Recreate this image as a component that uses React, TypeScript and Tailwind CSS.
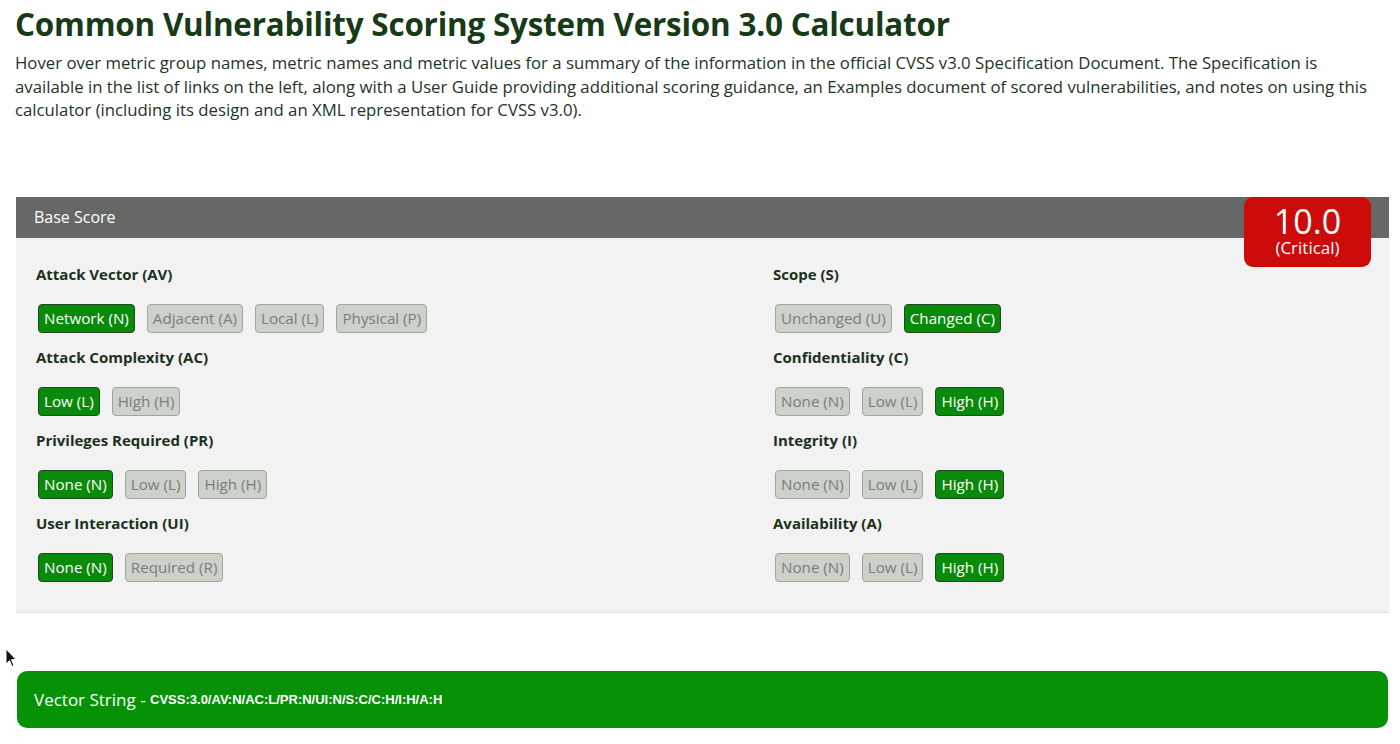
const groupsLeft = [
  { name: 'Attack Vector (AV)', options: ['Network (N)', 'Adjacent (A)', 'Local (L)', 'Physical (P)'], selected: 0 },
  { name: 'Attack Complexity (AC)', options: ['Low (L)', 'High (H)'], selected: 0 },
  { name: 'Privileges Required (PR)', options: ['None (N)', 'Low (L)', 'High (H)'], selected: 0 },
  { name: 'User Interaction (UI)', options: ['None (N)', 'Required (R)'], selected: 0 },
];

const groupsRight = [
  { name: 'Scope (S)', options: ['Unchanged (U)', 'Changed (C)'], selected: 1 },
  { name: 'Confidentiality (C)', options: ['None (N)', 'Low (L)', 'High (H)'], selected: 2 },
  { name: 'Integrity (I)', options: ['None (N)', 'Low (L)', 'High (H)'], selected: 2 },
  { name: 'Availability (A)', options: ['None (N)', 'Low (L)', 'High (H)'], selected: 2 },
];

type Group = { name: string; options: string[]; selected: number };

function Metric({ group }: { group: Group }) {
  return (
    <div className="mb-[14px]">
      <h3 className="h-5 text-[15px] font-bold leading-5 text-[#1c311c]">{group.name}</h3>
      <div className="ml-[2px] mt-[20px] flex gap-3">
        {group.options.map((opt, i) =>
          i === group.selected ? (
            <span
              key={opt}
              className="block h-[29px] rounded-[4px] border border-[#1f4a1f] bg-[#0a8a0a] px-[5px] text-[15.2px] leading-[27px] text-white"
            >
              {opt}
            </span>
          ) : (
            <span
              key={opt}
              className="block h-[29px] rounded-[4px] border border-[#9ea79b] bg-[#ccd1ca] px-[5px] text-[15.2px] leading-[27px] text-[#7a7f78]"
            >
              {opt}
            </span>
          )
        )}
      </div>
    </div>
  );
}

export default function App() {
  return (
    <div className="relative min-h-[744px] bg-white px-[15px] pt-[2px] font-['Open_Sans',sans-serif] text-[#243424]">
      <h1 className="text-[31.4px] font-bold leading-[44px] tracking-[-0.2px] text-[#173a17]">
        Common Vulnerability Scoring System Version 3.0 Calculator
      </h1>
      <p className="mt-[5px] w-[1355px] text-[16.75px] leading-[23.5px]">
        Hover over metric group names, metric names and metric values for a summary of the information in the official
        CVSS v3.0 Specification Document. The Specification is available in the list of links on the left, along with a
        User Guide providing additional scoring guidance, an Examples document of scored vulnerabilities, and notes on
        using this calculator (including its design and an XML representation for CVSS v3.0).
      </p>

      <section className="relative ml-px mt-[75px] w-[1373px] border-b border-dotted border-[#d0d4cf] bg-[#f2f2f2]">
        <div className="h-[41px] bg-[#666866] pl-[18px] text-[16px] leading-[41px] text-white">Base Score</div>
        <div className="absolute right-[18px] top-0 flex h-[70px] w-[127px] flex-col items-center rounded-[9px] bg-[#cc0b0b] pt-[7px] text-white">
          <span className="text-[34px] leading-[34px]">10.0</span>
          <span className="text-[17px] leading-[20px]">(Critical)</span>
        </div>
        <div className="grid grid-cols-[737px_1fr] pb-[16px] pl-[20px] pt-[26px]">
          <div>
            {groupsLeft.map((g) => (
              <Metric key={g.name} group={g} />
            ))}
          </div>
          <div>
            {groupsRight.map((g) => (
              <Metric key={g.name} group={g} />
            ))}
          </div>
        </div>
      </section>

      <svg className="absolute left-[5px] top-[648px]" width="12" height="20" viewBox="0 0 12 20">
        <path d="M1 1 L1 16 L4.5 12.5 L7 18.5 L9 17.5 L6.5 11.8 L11 11.5 Z" fill="#111" stroke="#fff" strokeWidth="1" />
      </svg>

      <div className="ml-[2px] mt-[58px] flex h-[57px] w-[1371px] items-center rounded-[10px] bg-[#069106] pl-[17px] pt-[2px] text-white">
        <span className="text-[17px]">Vector String -&nbsp;</span>
        <span className="font-['Liberation_Sans',sans-serif] text-[13px] font-bold">
          CVSS:3.0/AV:N/AC:L/PR:N/UI:N/S:C/C:H/I:H/A:H
        </span>
      </div>
    </div>
  );
}
